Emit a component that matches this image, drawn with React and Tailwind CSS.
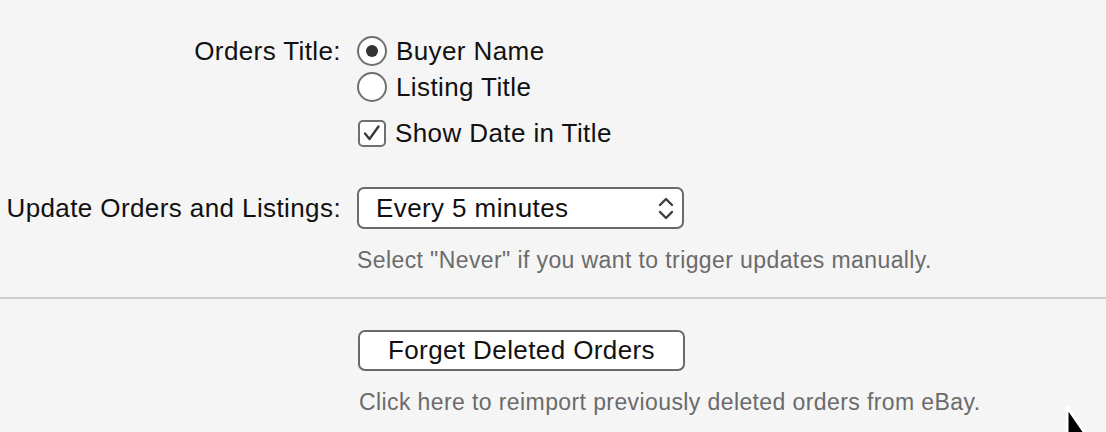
import { useState } from "react";

function Radio({ checked, label, onSelect }) {
  return (
    <button
      type="button"
      onClick={onSelect}
      className="flex items-center h-[36px] gap-[9px] text-left"
    >
      <span className="w-[30px] h-[30px] rounded-full border-2 border-[#6f6f6f] bg-white flex items-center justify-center shrink-0">
        {checked && <span className="w-[12px] h-[12px] rounded-full bg-[#333]" />}
      </span>
      <span>{label}</span>
    </button>
  );
}

function App() {
  const [title, setTitle] = useState("buyer");
  const [showDate, setShowDate] = useState(true);
  const [interval, setInterval] = useState("Every 5 minutes");

  return (
    <div
      className="relative w-[1106px] h-[432px] overflow-hidden bg-[#f5f5f5] text-[#111] text-[26px] tracking-[0.4px]"
      style={{ fontFamily: '"Liberation Sans", Arial, sans-serif' }}
    >
      <div className="grid grid-cols-[341px_1fr] gap-x-[16px] pt-[33px]">
        <div className="text-right h-[36px] leading-[36px]">Orders Title:</div>
        <div>
          <Radio
            checked={title === "buyer"}
            label="Buyer Name"
            onSelect={() => setTitle("buyer")}
          />
          <Radio
            checked={title === "listing"}
            label="Listing Title"
            onSelect={() => setTitle("listing")}
          />
          <button
            type="button"
            onClick={() => setShowDate(!showDate)}
            className="flex items-center gap-[9px] h-[36px] mt-[10px] ml-[1px]"
          >
            <span className="w-[28px] h-[27px] rounded-[5px] border-2 border-[#6f6f6f] bg-white flex items-center justify-center shrink-0">
              {showDate && (
                <svg width="20" height="18" viewBox="0 0 20 18">
                  <path
                    d="M3 9.5 L7.5 15 L16.5 2.5"
                    fill="none"
                    stroke="#3a3a3a"
                    strokeWidth="2.4"
                    strokeLinecap="round"
                    strokeLinejoin="round"
                  />
                </svg>
              )}
            </span>
            <span>Show Date in Title</span>
          </button>
        </div>

        <div className="text-right mt-[36px] h-[42px] leading-[42px] whitespace-nowrap">
          Update Orders and Listings:
        </div>
        <div className="mt-[36px]">
          <div className="relative w-[327px] h-[42px] rounded-[7px] border-2 border-[#6a6a6a] bg-white flex items-center pl-[17px]">
            <span>{interval}</span>
            <svg
              className="absolute right-[8px] top-[7px]"
              width="16"
              height="25"
              viewBox="0 0 16 25"
            >
              <path
                d="M2 9 L8 3 L14 9 M2 16 L8 22 L14 16"
                fill="none"
                stroke="#3c3c3c"
                strokeWidth="2.4"
                strokeLinecap="round"
                strokeLinejoin="round"
              />
            </svg>
          </div>
          <p className="mt-[18px] text-[23px] leading-[26px] text-[#6b6b6b] tracking-[0.4px]">
            Select "Never" if you want to trigger updates manually.
          </p>
        </div>
      </div>

      <div className="mt-[24px] h-[2px] bg-[#cbcbcb]" />

      <div className="pl-[358px] pt-[31px]">
        <button
          type="button"
          onClick={() => setInterval(interval)}
          className="w-[327px] h-[41px] rounded-[7px] border-2 border-[#6a6a6a] bg-white flex items-center justify-center"
        >
          Forget Deleted Orders
        </button>
        <p className="mt-[18px] text-[23px] leading-[26px] text-[#6b6b6b] tracking-[0.4px] pl-[1px]">
          Click here to reimport previously deleted orders from eBay.
        </p>
      </div>

      <svg
        className="absolute left-[1062px] top-[403px]"
        width="40"
        height="40"
        viewBox="0 0 40 40"
      >
        <path
          d="M5 4 L5 40 L30 40 Z"
          fill="#000"
          stroke="#fff"
          strokeWidth="3"
          strokeLinejoin="round"
        />
      </svg>
    </div>
  );
}

export default App;
